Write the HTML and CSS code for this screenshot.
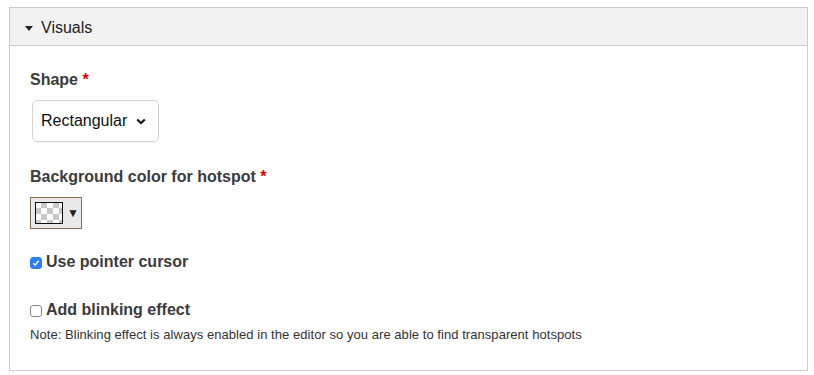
FILE: index.html
```html
<!DOCTYPE html>
<html>
<head>
<meta charset="utf-8">
<link rel="stylesheet" href="styles.css">
</head>
<body>
<div class="panel">
  <div class="panel-head">
    <span class="caret"></span>
    <span class="title">Visuals</span>
  </div>
  <div class="panel-body">
    <div class="field">
      <div class="label">Shape <span class="req">*</span></div>
      <div class="select">
        <span>Rectangular</span>
        <svg class="chev" width="10" height="7" viewBox="0 0 10 7"><path d="M1.2 1.4 L5 5 L8.8 1.4" fill="none" stroke="#111" stroke-width="2"/></svg>
      </div>
    </div>
    <div class="field field2">
      <div class="label">Background color for hotspot <span class="req">*</span></div>
      <div class="picker">
        <span class="swatch"></span>
        <span class="arrow">&#9660;</span>
      </div>
    </div>
    <label class="check">
      <span class="box checked"><svg width="8" height="8" viewBox="0 0 8 8"><path d="M1.3 4.2 L3.2 6 L6.7 1.6" fill="none" stroke="#fff" stroke-width="1.4"/></svg></span>
      <span>Use pointer cursor</span>
    </label>
    <label class="check check2">
      <span class="box"></span>
      <span>Add blinking effect</span>
    </label>
    <div class="note">Note: Blinking effect is always enabled in the editor so you are able to find transparent hotspots</div>
  </div>
</div>
</body>
</html>
```

FILE: styles.css
```css
html, body {
  margin: 0;
  padding: 0;
  background: #fff;
}
body {
  font-family: "Liberation Sans", Arial, sans-serif;
  color: #333;
}
.panel {
  margin: 7px 0 0 9px;
  width: 797px;
  height: 362px;
  border: 1px solid #ccc;
}
.panel-head {
  height: 38px;
  box-sizing: border-box;
  padding-top: 3px;
  background: #f2f2f2;
  border-bottom: 1px solid #ccc;
  display: flex;
  align-items: center;
  padding-left: 15px;
}
.caret {
  width: 0;
  height: 0;
  border-left: 4px solid transparent;
  border-right: 4px solid transparent;
  border-top: 5px solid #222;
  margin-right: 8px;
  margin-top: 0;
}
.title {
  font-size: 16px;
  color: #222;
}
.panel-body {
  padding: 24px 20px 0 20px;
}
.label {
  font-size: 16px;
  font-weight: bold;
  color: #3b3b3b;
  line-height: 19px;
}
.req {
  color: #d00;
}
.select {
  margin: 11px 0 0 2px;
  border: 1px solid #d3d3d3;
  border-radius: 5px;
  display: flex;
  align-items: center;
  padding-left: 8px;
  box-sizing: border-box;
  width: 127px;
  height: 42px;
  font-size: 16px;
  color: #111;
  box-shadow: 0 1px 1px rgba(0,0,0,0.04);
}
.chev {
  margin-left: 9px;
  margin-top: 1px;
}
.field2 {
  margin-top: 25px;
}
.picker {
  margin-top: 11px;
  width: 52px;
  height: 32px;
  box-sizing: border-box;
  border: 1px solid #8b6f52;
  background: #e9e9e9;
  display: flex;
  align-items: center;
  padding-left: 4px;
}
.swatch {
  width: 28px;
  height: 22px;
  box-sizing: border-box;
  border: 1px solid #111;
  background-color: #fff;
  background-image:
    linear-gradient(45deg, #c8c8c8 25%, transparent 25%, transparent 75%, #c8c8c8 75%),
    linear-gradient(45deg, #c8c8c8 25%, transparent 25%, transparent 75%, #c8c8c8 75%);
  background-size: 12px 12px;
  background-position: -1px -1px, 5px 5px;
}
.arrow {
  font-size: 12px;
  color: #222;
  margin-left: 4px;
}
.check {
  display: flex;
  align-items: center;
  font-size: 16px;
  font-weight: bold;
  color: #3b3b3b;
  margin-top: 24px;
}
.check2 {
  margin-top: 30px;
}
.box {
  width: 12px;
  height: 12px;
  box-sizing: border-box;
  border: 1px solid #888;
  border-radius: 3px;
  background: #fff;
  margin-right: 4px;
  margin-top: 2px;
  display: flex;
  align-items: center;
  justify-content: center;
}
.box.checked {
  background: #2d7ff9;
  border-color: #2d7ff9;
}
.note {
  margin-top: 8px;
  font-size: 13px;
  color: #333;
  letter-spacing: 0.05px;
}
```
